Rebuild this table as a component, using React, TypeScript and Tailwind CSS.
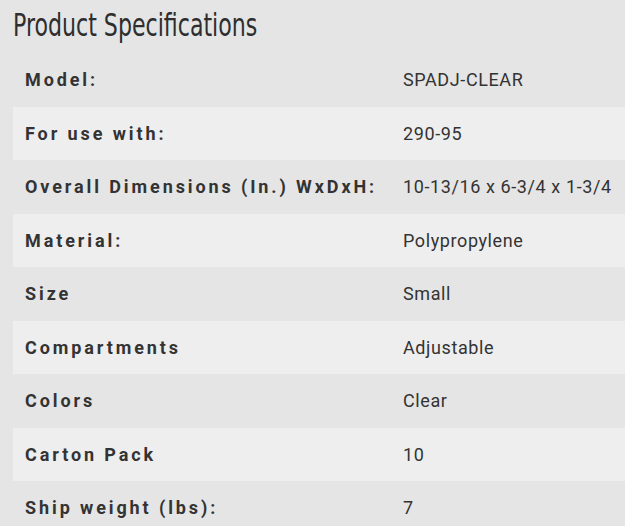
const specs: [string, string][] = [
  ["Model:", "SPADJ-CLEAR"],
  ["For use with:", "290-95"],
  ["Overall Dimensions (In.) WxDxH:", "10-13/16 x 6-3/4 x 1-3/4"],
  ["Material:", "Polypropylene"],
  ["Size", "Small"],
  ["Compartments", "Adjustable"],
  ["Colors", "Clear"],
  ["Carton Pack", "10"],
  ["Ship weight (lbs):", "7"],
];

export default function App() {
  return (
    <div className="min-h-screen w-[625px] overflow-hidden bg-[#e5e5e5] pl-[13px] font-['Roboto',sans-serif] text-[#333]">
      <h2 className="h-[53px] pt-[5px] font-['DejaVu_Sans_Condensed',sans-serif] text-[31.5px] leading-[40px] text-[#2e2e2e]">
        <span className="inline-block origin-left scale-x-[0.78] whitespace-nowrap">Product Specifications</span>
      </h2>
      <div className="w-[640px]">
        {specs.map(([label, value], i) => (
          <div
            key={label}
            className={`flex h-[53.5px] items-center ${i % 2 === 1 ? "bg-[#eeeeee]" : "bg-[#e5e5e5]"}`}
          >
            <div className="w-[390px] pl-[12px] text-[18px] font-bold tracking-[2.9px]">{label}</div>
            <div className="text-[18px] tracking-[0.6px]">{value}</div>
          </div>
        ))}
      </div>
    </div>
  );
}
